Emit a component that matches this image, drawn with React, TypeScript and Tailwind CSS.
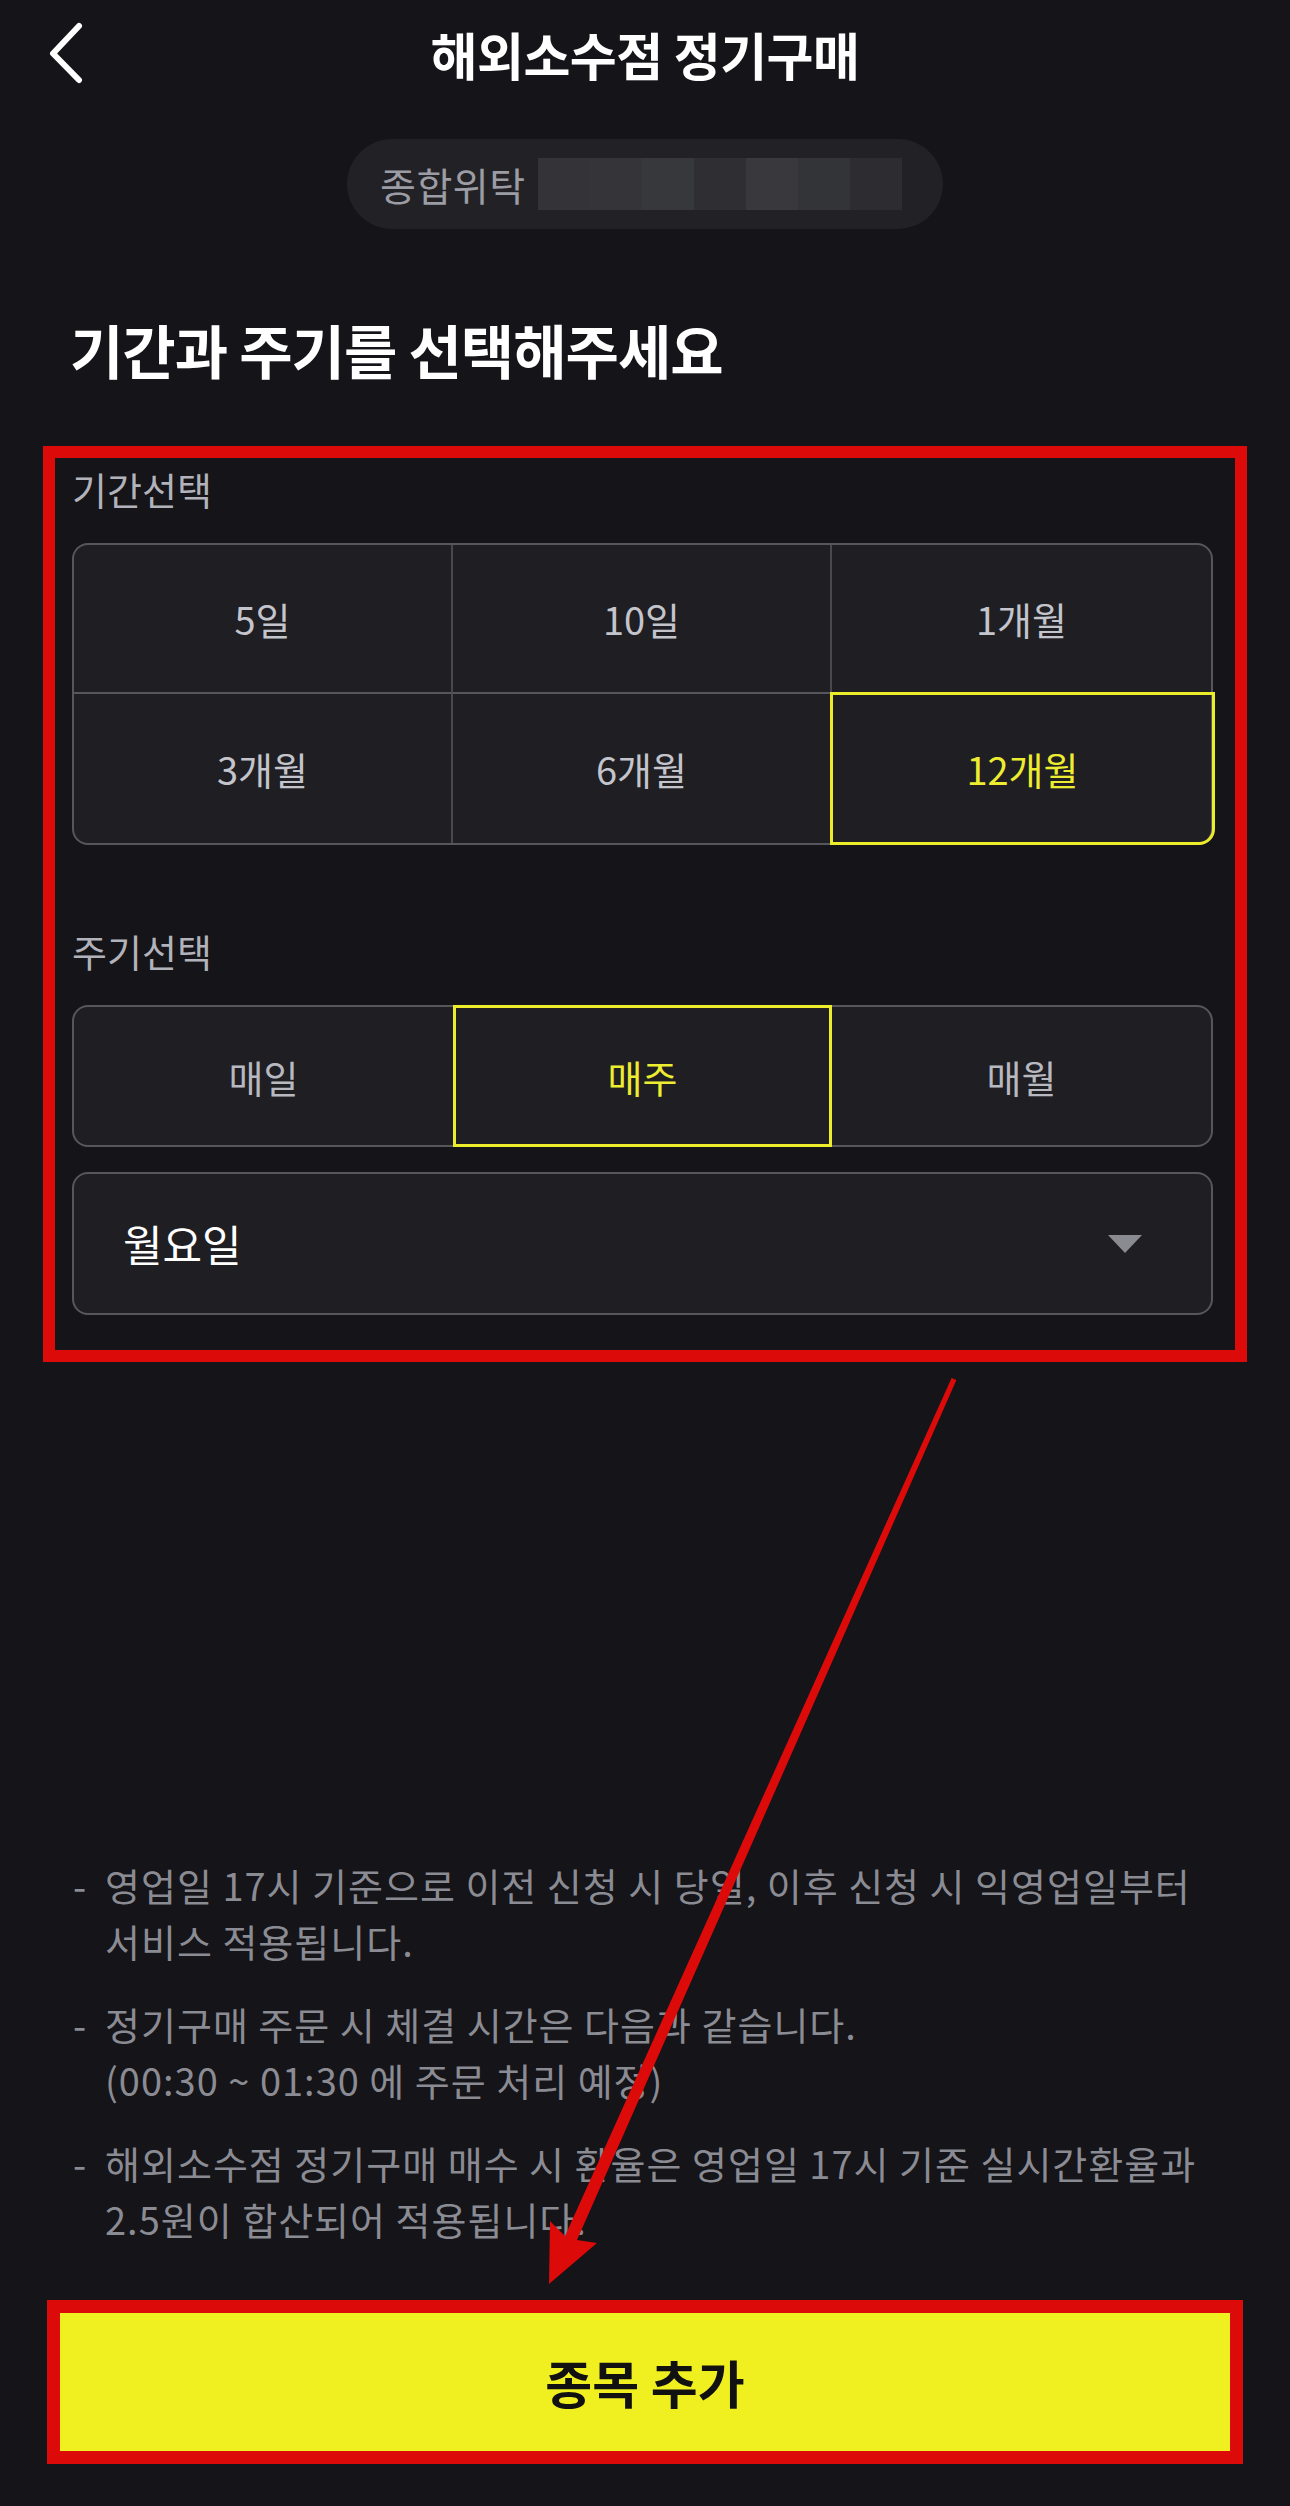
import React from "react";

const periods = ["5일", "10일", "1개월", "3개월", "6개월", "12개월"];
const cycles = ["매일", "매주", "매월"];
const blurShades = ["#333338", "#343439", "#37383c", "#2f2f33", "#38383d", "#333438", "#2d2d31"];

const notes = [
  ["영업일 17시 기준으로 이전 신청 시 당일, 이후 신청 시 익영업일부터", "서비스 적용됩니다."],
  ["정기구매 주문 시 체결 시간은 다음과 같습니다.", "(00:30 ~ 01:30 에 주문 처리 예정)"],
  ["해외소수점 정기구매 매수 시 환율은 영업일 17시 기준 실시간환율과", "2.5원이 합산되어 적용됩니다."],
];

export default function App() {
  const selectedPeriod = 5;
  const selectedCycle = 1;

  return (
    <div className="relative h-[2506px] w-[1290px] overflow-hidden bg-[#141419] [font-family:'Noto_Sans_CJK_KR','Noto_Sans',sans-serif]">
      <main className="flex h-full flex-col">
        {/* header */}
        <header className="grid h-[108px] grid-cols-[1fr_auto_1fr] items-center">
          <button className="ml-[46px] flex h-[64px] w-[40px] items-center">
            <svg width="40" height="64" viewBox="0 0 40 64" fill="none">
              <path d="M33 4 L7 31.5 L33 58" stroke="#ffffff" strokeWidth="6" strokeLinecap="round" strokeLinejoin="round" />
            </svg>
          </button>
          <h1 className="text-[51px] font-bold leading-none tracking-[-0.5px] text-white">해외소수점 정기구매</h1>
          <div />
        </header>

        {/* account pill */}
        <div className="mx-auto mt-[31px] flex h-[90px] w-[596px] items-center rounded-full bg-[#222226] pl-[33px]">
          <span className="text-[39px] leading-none tracking-[0.5px] text-[#9c9ca4]">종합위탁</span>
          <div className="ml-[12px] flex h-[52px]">
            {blurShades.map((c, i) => (
              <div key={i} className="h-full w-[52px]" style={{ backgroundColor: c }} />
            ))}
          </div>
        </div>

        <h2 className="mt-[85px] pl-[70px] text-[58px] font-bold leading-[70px] tracking-[-1px] text-white">
          기간과 주기를 선택해주세요
        </h2>

        {/* annotated selection box */}
        <section className="mx-[43px] mt-[62px] border-[12px] border-[#dd0a0a] pb-[35px] pl-[17px] pr-[22px] pt-[7px]">
          <p className="text-[38px] leading-[48px] text-[#b2b2ba]">기간선택</p>
          <div className="mt-[30px] grid grid-cols-3 rounded-[16px] border-2 border-[#56565d] bg-[#1e1e23]">
            {periods.map((p, i) => {
              const active = i === selectedPeriod;
              const col = i % 3;
              const row = Math.floor(i / 3);
              return (
                <div
                  key={p}
                  className={
                    active
                      ? "-m-[2px] -mr-[4px] flex h-[153px] items-center justify-center rounded-br-[16px] border-[3px] border-[#ecec2a] text-[38px] text-[#ecec30]"
                      : `flex h-[149px] items-center justify-center text-[38px] text-[#c4c4cc] ${col < 2 ? "border-r-2 border-r-[#48484e]" : ""} ${row === 0 ? "border-b-2 border-b-[#56565d]" : ""}`
                  }
                >
                  {p}
                </div>
              );
            })}
          </div>

          <p className="mt-[82px] text-[38px] leading-[48px] text-[#b2b2ba]">주기선택</p>
          <div className="mt-[30px] grid h-[142px] grid-cols-3 rounded-[16px] border-2 border-[#56565d] bg-[#1e1e23]">
            {cycles.map((c, i) =>
              i === selectedCycle ? (
                <div
                  key={c}
                  className="-my-[2px] flex items-center justify-center border-[3px] border-[#ecec2a] text-[38px] text-[#ecec30]"
                >
                  {c}
                </div>
              ) : (
                <div key={c} className="flex items-center justify-center text-[38px] text-[#b8b8c0]">
                  {c}
                </div>
              )
            )}
          </div>

          <div className="mt-[25px] flex h-[143px] items-center justify-between rounded-[16px] border-2 border-[#56565d] bg-[#1e1e23] pl-[49px] pr-[69px]">
            <span className="text-[43px] text-white">월요일</span>
            <svg width="34" height="18" viewBox="0 0 34 18">
              <path d="M0 0 H34 L17 18 Z" fill="#8a8a91" />
            </svg>
          </div>
        </section>

        <div className="flex-1" />

        {/* notes */}
        <div className="flex flex-col gap-[27px] pl-[73px] text-[38px] leading-[56px] tracking-[1px] text-[#8b8b93]">
          {notes.map((lines, i) => (
            <div key={i} className="flex">
              <span className="w-[32px] shrink-0">-</span>
              <p className="whitespace-nowrap">
                {lines[0]}
                <br />
                {lines[1]}
              </p>
            </div>
          ))}
        </div>

        {/* bottom button, annotated */}
        <div className="mx-[47px] mb-[42px] mt-[53px] border-[13px] border-[#dd0a0a]">
          <button className="flex h-[138px] w-full items-center justify-center bg-[#f0f020] text-[51px] font-bold text-[#111111]">
            종목 추가
          </button>
        </div>
      </main>

      {/* annotation arrow */}
      <svg
        className="pointer-events-none absolute left-0 top-0"
        width="1290"
        height="2506"
        viewBox="0 0 1290 2506"
      >
        <polygon
          points="951.6,1377.9 956.4,1380.1 577,2240 597,2243 549,2284 550,2221 565,2236"
          fill="#dd0a0a"
        />
      </svg>
    </div>
  );
}
